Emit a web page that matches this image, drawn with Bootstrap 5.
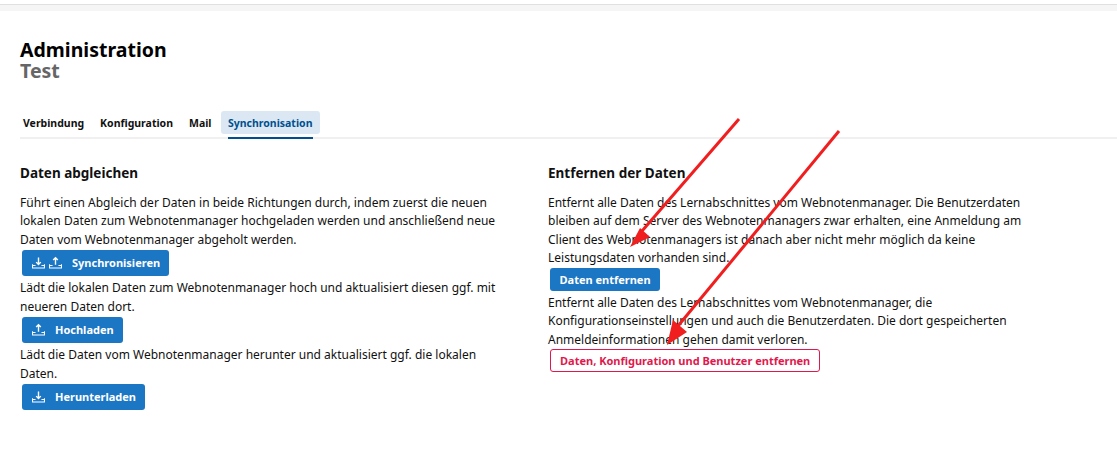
<!DOCTYPE html>
<html lang="de">
<head>
<meta charset="utf-8">
<title>Administration</title>
<link href="https://cdn.jsdelivr.net/npm/bootstrap@5.3.0/dist/css/bootstrap.min.css" rel="stylesheet">
<style>
html,body{height:100%;overflow:hidden}
body{font-family:"Noto Sans",sans-serif;font-size:12px;line-height:18.3px;color:#111;background:#fff;position:relative}
.topstrip{background:#f5f5f5;border-top:1px solid #e0e0e0;margin-top:4px;box-sizing:border-box;height:7px}
.head-wrap{padding:28px 20px 0}
.title-a{font-size:19.5px;line-height:22px;font-weight:700;color:#000;margin:0}
.title-b{font-size:19.5px;line-height:20px;font-weight:700;color:#666;margin:0}
.tabbar{margin:30px 0 0 20px;height:28px;border-bottom:2px solid #f0f0f0}
.tabitem{font-size:10.5px;font-weight:700;line-height:25px;height:23px;padding:0 3px;margin-right:10px;color:#111;position:relative;border-radius:3px;text-decoration:none}
.tabitem.on{background:#dbe8f3;color:#00508f;padding:0 7.5px 0 6.5px;margin-left:-3px;margin-right:0;line-height:25px}
.tabitem.on::after{content:"";position:absolute;left:7px;right:7px;top:26px;height:2px;background:#00508f}
.cols{padding:25px 0 0 20px;gap:38px}
.colblock{width:490px;flex:none}
.sect{font-size:13.5px;line-height:18px;font-weight:700;color:#111;margin:0 0 12px}
.para{margin:0;width:490px}
.actbtn{display:inline-flex;align-items:center;height:26px;margin:1px 0 3px 2px;padding:0 9px;font-size:11px;font-weight:700;line-height:1;color:#fff;background:#1b76c4;border:0;border-radius:3px}
.actbtn.ico{padding:0 9px 0 10px;margin-bottom:3.4px}
.actbtn.plain{height:23px;margin-top:1px;margin-bottom:3px;padding:0 9.5px}
.actbtn svg{width:13px;height:13px;flex:none;margin-right:4px}
.actbtn svg:last-of-type{margin-right:10px}
.actbtn.dang{background:#fff;color:#e0184d;border:1px solid #e0184d;height:23px;padding:0 9px;margin-top:0}
.marks{position:absolute;left:0;top:0;width:1117px;height:449px;pointer-events:none}
</style>
</head>
<body>
<div class="topstrip"></div>
<div class="head-wrap">
  <h1 class="title-a">Administration</h1>
  <h2 class="title-b">Test</h2>
</div>
<nav class="tabbar d-flex align-items-start">
  <a class="tabitem" href="#">Verbindung</a>
  <a class="tabitem" href="#">Konfiguration</a>
  <a class="tabitem" href="#">Mail</a>
  <a class="tabitem on" href="#">Synchronisation</a>
</nav>
<main class="cols d-flex">
  <section class="colblock">
    <h3 class="sect">Daten abgleichen</h3>
    <p class="para">Führt einen Abgleich der Daten in beide Richtungen durch, indem zuerst die neuen lokalen Daten zum Webnotenmanager hochgeladen werden und anschließend neue Daten vom Webnotenmanager abgeholt werden.</p>
    <button class="actbtn ico" type="button">
      <svg viewBox="0 0 14 14" fill="none" stroke="#fff" stroke-width="1.100"><path d="M.6 9v4h12.800V9M.6 10.200h3.200M13.400 10.200h-3.200"/><path d="M7 1.500v7.500M4.500 6.600 7 9.200l2.500-2.600" stroke-width="1.500"/></svg>
      <svg viewBox="0 0 14 14" fill="none" stroke="#fff" stroke-width="1.100"><path d="M.6 9v4h12.800V9M.6 10.200h3.200M13.400 10.200h-3.200"/><path d="M7 9.500V2.200M4.500 4.400 7 1.800l2.500 2.600" stroke-width="1.500"/></svg>
      Synchronisieren</button>
    <p class="para">Lädt die lokalen Daten zum Webnotenmanager hoch und aktualisiert diesen ggf. mit neueren Daten dort.</p>
    <button class="actbtn ico" type="button">
      <svg viewBox="0 0 14 14" fill="none" stroke="#fff" stroke-width="1.100"><path d="M.6 9v4h12.800V9M.6 10.200h3.200M13.400 10.200h-3.200"/><path d="M7 9.500V2.200M4.500 4.400 7 1.800l2.500 2.600" stroke-width="1.500"/></svg>
      Hochladen</button>
    <p class="para">Lädt die Daten vom Webnotenmanager herunter und aktualisiert ggf. die lokalen Daten.</p>
    <button class="actbtn ico" type="button">
      <svg viewBox="0 0 14 14" fill="none" stroke="#fff" stroke-width="1.100"><path d="M.6 9v4h12.800V9M.6 10.200h3.200M13.400 10.200h-3.200"/><path d="M7 1.500v7.500M4.500 6.600 7 9.200l2.500-2.600" stroke-width="1.500"/></svg>
      Herunterladen</button>
  </section>
  <section class="colblock">
    <h3 class="sect">Entfernen der Daten</h3>
    <p class="para">Entfernt alle Daten des Lernabschnittes vom Webnotenmanager. Die Benutzerdaten bleiben auf dem Server des Webnotenmanagers zwar erhalten, eine Anmeldung am Client des Webnotenmanagers ist danach aber nicht mehr möglich da keine Leistungsdaten vorhanden sind.</p>
    <button class="actbtn plain" type="button">Daten entfernen</button>
    <p class="para">Entfernt alle Daten des Lernabschnittes vom Webnotenmanager, die Konfigurationseinstellungen und auch die Benutzerdaten. Die dort gespeicherten Anmeldeinformationen gehen damit verloren.</p>
    <button class="actbtn dang" type="button">Daten, Konfiguration und Benutzer entfernen</button>
  </section>
</main>
<svg class="marks" viewBox="0 0 1117 449">
  <path d="M739 119 642 231" stroke="#f01e1e" stroke-width="3" fill="none"/>
  <path d="M630 247 640 228 650 237Z" fill="#f01e1e"/>
  <path d="M839 131 678 326" stroke="#f01e1e" stroke-width="3" fill="none"/>
  <path d="M667 345 673 320 687 332Z" fill="#f01e1e"/>
</svg>
<script src="https://cdn.jsdelivr.net/npm/bootstrap@5.3.0/dist/js/bootstrap.bundle.min.js"></script>
</body>
</html>
